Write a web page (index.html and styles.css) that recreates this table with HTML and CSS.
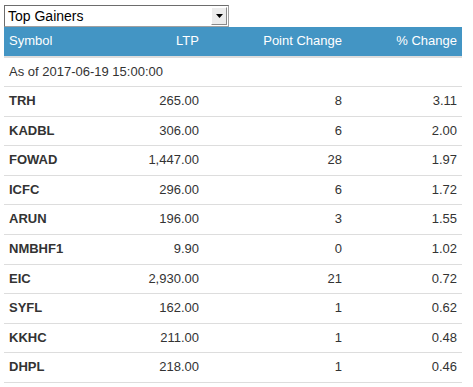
FILE: index.html
```html
<!DOCTYPE html>
<html>
<head>
<meta charset="utf-8">
<link rel="stylesheet" href="styles.css">
</head>
<body>
<div class="wrap">
  <div class="select">
    <span class="select-text">Top Gainers</span>
    <span class="select-btn"><svg width="7" height="4" viewBox="0 0 7 4"><path d="M0 0H7L3.5 4Z" fill="#000"/></svg></span>
  </div>
  <table class="tbl">
    <thead>
      <tr><th class="c1">Symbol</th><th class="c2">LTP</th><th class="c3">Point Change</th><th class="c4">% Change</th></tr>
    </thead>
    <tbody>
      <tr><td colspan="4" class="asof">As of 2017-06-19 15:00:00</td></tr>
      <tr><td class="sym">TRH</td><td class="num">265.00</td><td class="num">8</td><td class="num">3.11</td></tr>
      <tr><td class="sym">KADBL</td><td class="num">306.00</td><td class="num">6</td><td class="num">2.00</td></tr>
      <tr><td class="sym">FOWAD</td><td class="num">1,447.00</td><td class="num">28</td><td class="num">1.97</td></tr>
      <tr><td class="sym">ICFC</td><td class="num">296.00</td><td class="num">6</td><td class="num">1.72</td></tr>
      <tr><td class="sym">ARUN</td><td class="num">196.00</td><td class="num">3</td><td class="num">1.55</td></tr>
      <tr><td class="sym">NMBHF1</td><td class="num">9.90</td><td class="num">0</td><td class="num">1.02</td></tr>
      <tr><td class="sym">EIC</td><td class="num">2,930.00</td><td class="num">21</td><td class="num">0.72</td></tr>
      <tr><td class="sym">SYFL</td><td class="num">162.00</td><td class="num">1</td><td class="num">0.62</td></tr>
      <tr><td class="sym">KKHC</td><td class="num">211.00</td><td class="num">1</td><td class="num">0.48</td></tr>
      <tr><td class="sym">DHPL</td><td class="num">218.00</td><td class="num">1</td><td class="num">0.46</td></tr>
    </tbody>
  </table>
</div>
</body>
</html>
```

FILE: styles.css
```css
html, body {
  margin: 0;
  padding: 0;
  background: #fff;
}
body {
  font-family: "Liberation Sans", Arial, sans-serif;
  font-size: 13px;
  color: #333;
}
.wrap {
  padding: 5px 11px 0 4px;
}
.select {
  width: 225px;
  height: 22px;
  box-sizing: border-box;
  border: 1px solid #a0a0a0;
  border-top-color: #6d6d6d;
  border-left-color: #6d6d6d;
  display: flex;
  align-items: center;
  justify-content: space-between;
  padding: 1px;
  background: #fff;
}
.select-text {
  font-size: 14px;
  color: #000;
  padding-left: 2px;
}
.select-btn {
  width: 16px;
  height: 18px;
  box-sizing: border-box;
  background: #ececec;
  border: 1px solid #fff;
  border-right-color: #8a8a8a;
  border-bottom-color: #8a8a8a;
  display: flex;
  align-items: center;
  justify-content: center;
}
.tbl {
  width: 458px;
  border-collapse: collapse;
  table-layout: fixed;
  margin-top: 0;
}
.tbl th {
  box-sizing: border-box;
  background: #4395c4;
  color: #fff;
  font-weight: normal;
  padding: 5px 5px;
  line-height: 18.57px;
  border-bottom: 2px solid #ddd;
  text-align: right;
}
.tbl th.c1 { text-align: left; width: 100px; }
.tbl th.c2 { width: 100px; }
.tbl th.c3 { width: 143px; }
.tbl th.c4 { width: 115px; }
.tbl td {
  padding: 5px 5px;
  line-height: 18.57px;
  border-bottom: 1px solid #ddd;
}
.tbl td.sym {
  font-weight: bold;
  text-align: left;
}
.tbl td.num {
  text-align: right;
}
.tbl td.asof {
  text-align: left;
}
```
